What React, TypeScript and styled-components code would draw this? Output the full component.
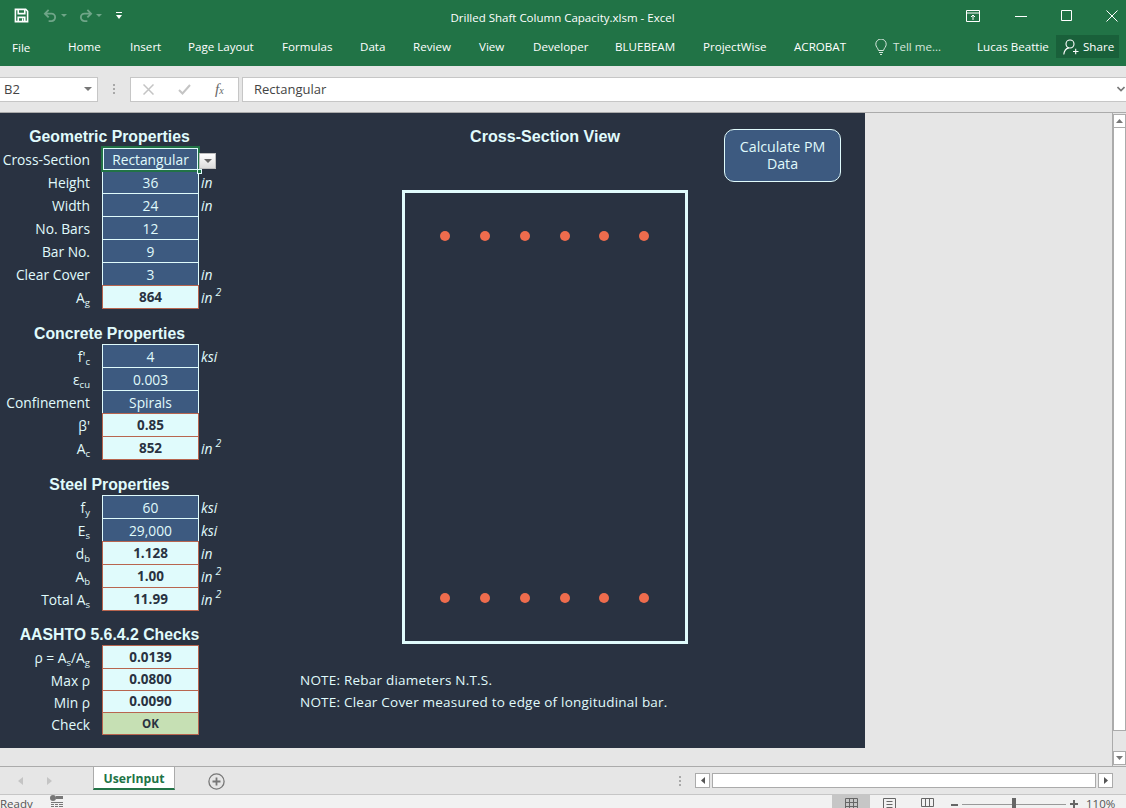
import React from "react";
import styled, { createGlobalStyle } from "styled-components";

const GlobalStyle = createGlobalStyle`
  html, body { margin: 0; padding: 0; overflow: hidden; background: #e6e6e6; }
  * { box-sizing: border-box; }
`;

const ribbonTabs = [
  { label: "Home", width: 62 },
  { label: "Insert", width: 58 },
  { label: "Page Layout", width: 94 },
  { label: "Formulas", width: 78 },
  { label: "Data", width: 53 },
  { label: "Review", width: 66 },
  { label: "View", width: 54 },
  { label: "Developer", width: 82 },
  { label: "BLUEBEAM", width: 88 },
  { label: "ProjectWise", width: 91 },
  { label: "ACROBAT", width: 81 },
];

type Row = {
  label: React.ReactNode;
  value: string;
  kind?: "input" | "calc" | "ok";
  unit?: React.ReactNode;
  short?: boolean;
  selected?: boolean;
};

const inch2 = (
  <>
    in<UnitSup>2</UnitSup>
  </>
);

function UnitSup({ children }: { children: React.ReactNode }) {
  return <SupText>{children}</SupText>;
}

const sections: { title: string; rows: Row[] }[] = [
  {
    title: "Geometric Properties",
    rows: [
      { label: "Cross-Section", value: "Rectangular", selected: true },
      { label: "Height", value: "36", unit: "in" },
      { label: "Width", value: "24", unit: "in" },
      { label: "No. Bars", value: "12" },
      { label: "Bar No.", value: "9" },
      { label: "Clear Cover", value: "3", unit: "in" },
      { label: <>A<sub>g</sub></>, value: "864", kind: "calc", unit: inch2 },
    ],
  },
  {
    title: "Concrete Properties",
    rows: [
      { label: <>f'<sub>c</sub></>, value: "4", unit: "ksi" },
      { label: <>ε<sub>cu</sub></>, value: "0.003" },
      { label: "Confinement", value: "Spirals" },
      { label: "β'", value: "0.85", kind: "calc" },
      { label: <>A<sub>c</sub></>, value: "852", kind: "calc", unit: inch2 },
    ],
  },
  {
    title: "Steel Properties",
    rows: [
      { label: <>f<sub>y</sub></>, value: "60", unit: "ksi" },
      { label: <>E<sub>s</sub></>, value: "29,000", unit: "ksi" },
      { label: <>d<sub>b</sub></>, value: "1.128", kind: "calc", unit: "in" },
      { label: <>A<sub>b</sub></>, value: "1.00", kind: "calc", unit: inch2 },
      { label: <>Total A<sub>s</sub></>, value: "11.99", kind: "calc", unit: inch2 },
    ],
  },
  {
    title: "AASHTO 5.6.4.2 Checks",
    rows: [
      { label: <>ρ = A<sub>s</sub>/A<sub>g</sub></>, value: "0.0139", kind: "calc" },
      { label: "Max ρ", value: "0.0800", kind: "calc", short: true },
      { label: "Min ρ", value: "0.0090", kind: "calc", short: true },
      { label: "Check", value: "OK", kind: "ok", short: true },
    ],
  },
];

const barXs = [43, 83, 123, 163, 202, 242];

const App: React.FC = () => {
  return (
    <>
      <GlobalStyle />
      <Window>
        <TitleBar>
          <QuickAccess>
            <SaveIcon width="15" height="15" viewBox="0 0 16 16" fill="none" stroke="#fff" strokeWidth="1.7">
              <path d="M1.500 1.500h11l2 2v11h-13z" />
              <path d="M4.500 2v4h7V2M4.500 14.500V10h7v4.500" />
              <path d="M8.500 11h1.500v3H8.500z" fill="#fff" stroke="none" />
            </SaveIcon>
            <UndoIcon>
              <svg width="15" height="13" viewBox="0 0 16 14" fill="none" stroke="#6fa588" strokeWidth="2">
                <path d="M6 1 2 5l4 4M2 5h7a4 4 0 0 1 0 8H6" />
              </svg>
              <TinyCaret />
            </UndoIcon>
            <UndoIcon>
              <svg width="15" height="13" viewBox="0 0 16 14" fill="none" stroke="#6fa588" strokeWidth="2">
                <path d="M10 1l4 4-4 4M14 5H7a4 4 0 0 0 0 8h3" />
              </svg>
              <TinyCaret />
            </UndoIcon>
            <svg width="8" height="8" viewBox="0 0 8 8" fill="#fff">
              <path d="M1 0h6v1H1zM1 3h6L4 7z" />
            </svg>
          </QuickAccess>
          <DocTitle>Drilled Shaft Column Capacity.xlsm - Excel</DocTitle>
          <WindowControls>
            <svg width="14" height="12" viewBox="0 0 14 12" fill="none" stroke="#fff">
              <path d="M.5.5h13v11H.5zM.5 3h13M7 10V5M5 7l2-2 2 2" />
            </svg>
            <svg width="12" height="12" viewBox="0 0 12 12" stroke="#fff">
              <path d="M0 6.500h12" />
            </svg>
            <svg width="11" height="11" viewBox="0 0 11 11" fill="none" stroke="#fff">
              <path d="M.5.5h10v10H.5z" />
            </svg>
            <svg width="12" height="12" viewBox="0 0 12 12" stroke="#fff">
              <path d="M.5.5l11 11M11.500.5l-11 11" />
            </svg>
          </WindowControls>
        </TitleBar>

        <RibbonBar>
          <FileTab>File</FileTab>
          {ribbonTabs.map((tab) => (
            <RibbonTab key={tab.label} style={{ width: tab.width }}>
              {tab.label}
            </RibbonTab>
          ))}
          <TellMe>
            <svg width="12" height="16" viewBox="0 0 12 16" fill="none" stroke="#d5e6dc">
              <path d="M3.500 11.500C3 9 .8 8 .8 5.200a5.200 5.200 0 0 1 10.400 0C11.200 8 9 9 8.500 11.500zM4 13.500h4M5 15.500h2" />
            </svg>
            Tell me...
          </TellMe>
          <UserName>Lucas Beattie</UserName>
          <ShareButton>
            <svg width="16" height="16" viewBox="0 0 16 16" fill="none" stroke="#fff" strokeWidth="1.1">
              <circle cx="7" cy="5" r="4" />
              <path d="M.8 15.500c.4-3.500 2.500-6 5-6.600M10 12.500h5.500M12.700 9.800v5.400" />
            </svg>
            Share
          </ShareButton>
        </RibbonBar>

        <FormulaBar>
          <NameBox>
            B2
            <svg width="8" height="4" viewBox="0 0 8 4" fill="#777">
              <path d="M0 0h8L4 4z" />
            </svg>
          </NameBox>
          <GripDots />
          <FormulaButtons>
            <svg width="11" height="11" viewBox="0 0 11 11" stroke="#c4c4c4" strokeWidth="1.500">
              <path d="M.5.5l10 10M10.500.5l-10 10" />
            </svg>
            <svg width="13" height="11" viewBox="0 0 13 11" fill="none" stroke="#c4c4c4" strokeWidth="2">
              <path d="M1 6l3.500 3.500L12 1" />
            </svg>
            <FxLabel>
              f<FxSmall>x</FxSmall>
            </FxLabel>
          </FormulaButtons>
          <FormulaInput>
            Rectangular
            <svg width="8" height="6" viewBox="0 0 8 6" fill="none" stroke="#777" strokeWidth="1.600">
              <path d="M.5 1L4 4.500 7.500 1" />
            </svg>
          </FormulaInput>
        </FormulaBar>

        <SheetArea>
          <SheetViewport>
            <DarkPanel>
              <InputColumn>
                {sections.map((section) => (
                  <Section key={section.title}>
                    <SectionTitle>{section.title}</SectionTitle>
                    {section.rows.map((row) => (
                      <DataRow key={row.value} $short={row.short}>
                        <RowLabel>{row.label}</RowLabel>
                        <Cell $kind={row.kind ?? "input"} $short={row.short} $selected={row.selected}>
                          {row.value}
                          {row.selected && (
                            <>
                              <SelectionFrame />
                              <FillHandle />
                              <DropButton>
                                <svg width="8" height="4" viewBox="0 0 8 4" fill="#666">
                                  <path d="M0 0h8L4 4z" />
                                </svg>
                              </DropButton>
                            </>
                          )}
                        </Cell>
                        <Unit>{row.unit}</Unit>
                      </DataRow>
                    ))}
                  </Section>
                ))}
              </InputColumn>
              <ViewColumn>
                <ViewHeader>
                  <ViewTitle>Cross-Section View</ViewTitle>
                  <CalcButton>Calculate PM Data</CalcButton>
                </ViewHeader>
                <Drawing width="286" height="454" viewBox="0 0 286 454">
                  <rect x="1.500" y="1.500" width="283" height="451" fill="none" stroke="#e0fbfc" strokeWidth="3" />
                  {barXs.map((x) => (
                    <g key={x} fill="#ee6c4d">
                      <circle cx={x} cy="46" r="5" />
                      <circle cx={x} cy="408" r="5" />
                    </g>
                  ))}
                </Drawing>
                <Notes>
                  <div>NOTE: Rebar diameters N.T.S.</div>
                  <div>NOTE: Clear Cover measured to edge of longitudinal bar.</div>
                </Notes>
              </ViewColumn>
            </DarkPanel>
          </SheetViewport>
          <VScroll>
            <ScrollEnd>
              <svg width="7" height="4" viewBox="0 0 7 4" fill="#777">
                <path d="M0 4h7L3.500 0z" />
              </svg>
            </ScrollEnd>
            <ScrollThumb />
            <ScrollEnd>
              <svg width="7" height="4" viewBox="0 0 7 4" fill="#777">
                <path d="M0 0h7L3.500 4z" />
              </svg>
            </ScrollEnd>
          </VScroll>
        </SheetArea>

        <TabStrip>
          <TabNav>
            <svg width="6" height="8" viewBox="0 0 6 8" fill="#c4c4c4">
              <path d="M5 0v8L0 4z" />
            </svg>
            <svg width="6" height="8" viewBox="0 0 6 8" fill="#c4c4c4">
              <path d="M1 0v8l5-4z" />
            </svg>
          </TabNav>
          <SheetTab>UserInput</SheetTab>
          <AddSheet>
            <svg width="17" height="17" viewBox="0 0 17 17" fill="none" stroke="#777" strokeWidth="1.300">
              <circle cx="8.500" cy="8.500" r="7.600" />
              <path strokeWidth="1.800" d="M8.500 4.500v8M4.500 8.500h8" />
            </svg>
          </AddSheet>
          <GripDots />
          <HScroll>
            <HScrollEnd>
              <svg width="4" height="7" viewBox="0 0 4 7" fill="#555">
                <path d="M4 0v7L0 3.500z" />
              </svg>
            </HScrollEnd>
            <HScrollTrack />
            <HScrollEnd>
              <svg width="4" height="7" viewBox="0 0 4 7" fill="#555">
                <path d="M0 0v7l4-3.500z" />
              </svg>
            </HScrollEnd>
          </HScroll>
        </TabStrip>

        <StatusBar>
          <StatusText>Ready</StatusText>
          <svg width="13" height="13" viewBox="0 0 13 13" fill="#777">
            <circle cx="3" cy="3" r="3" />
            <path d="M6 1h7v3H6zM1 7h12v1H1zM1 9h3v1H1zM5 9h3v1H5zM9 9h4v1H9zM1 11h3v1H1zM5 11h3v1H5zM9 11h4v1H9z" />
          </svg>
          <ViewButtons>
            <ViewButton $active>
              <svg width="13" height="13" viewBox="0 0 13 13" fill="none" stroke="#666">
                <path d="M.5.5h12v12H.5zM.5 4.500h12M.5 8.500h12M4.500.5v12M8.500.5v12" />
              </svg>
            </ViewButton>
            <ViewButton>
              <svg width="13" height="13" viewBox="0 0 13 13" fill="none" stroke="#666">
                <path d="M.5.5h12v12H.5zM3.500 3.500h6M3.500 6.500h6M3.500 9.500h6" />
              </svg>
            </ViewButton>
            <ViewButton>
              <svg width="13" height="13" viewBox="0 0 13 13" fill="none" stroke="#666">
                <path d="M.5.5h12v8H.5zM4.500.5v8M8.500.5v8" />
              </svg>
            </ViewButton>
          </ViewButtons>
          <ZoomSlider>
            <svg width="7" height="7" viewBox="0 0 7 7" fill="#666">
              <path d="M0 3h7v2H0z" />
            </svg>
            <ZoomTrack>
              <ZoomThumb />
            </ZoomTrack>
            <svg width="8" height="8" viewBox="0 0 8 8" fill="#666">
              <path d="M0 3h8v2H0zM3 0h2v8H3z" />
            </svg>
          </ZoomSlider>
          <ZoomValue>110%</ZoomValue>
        </StatusBar>
      </Window>
    </>
  );
};

const uiFont = `"Open Sans", "Noto Sans", sans-serif`;

const Window = styled.div`
  width: 1126px;
  height: 808px;
  display: flex;
  flex-direction: column;
  overflow: hidden;
  background: #e6e6e6;
  font-family: ${uiFont};
`;

const TitleBar = styled.div`
  height: 33px;
  flex: none;
  background: #217346;
  display: flex;
  align-items: center;
  position: relative;
  padding-bottom: 2px;
  color: #fff;
`;

const QuickAccess = styled.div`
  display: flex;
  align-items: center;
  gap: 11px;
  padding-left: 14px;
  & > svg:last-child {
    margin-left: 2px;
  }
`;

const SaveIcon = styled.svg`
  margin-right: 3px;
`;

const UndoIcon = styled.div`
  display: flex;
  align-items: center;
  gap: 3px;
`;

const TinyCaret = styled.span`
  width: 0;
  height: 0;
  border-left: 3px solid transparent;
  border-right: 3px solid transparent;
  border-top: 3px solid #6fa588;
`;

const DocTitle = styled.div`
  position: absolute;
  left: 450px;
  width: 225px;
  top: 10px;
  text-align: center;
  white-space: nowrap;
  font-size: 11.5px;
  line-height: 16px;
`;

const WindowControls = styled.div`
  margin-left: auto;
  display: flex;
  align-items: center;
  gap: 34px;
  padding-right: 8px;
  & > svg:first-child {
    margin-right: 1px;
  }
`;

const RibbonBar = styled.div`
  height: 33px;
  flex: none;
  background: #217346;
  display: flex;
  align-items: center;
  padding-bottom: 6px;
  color: #fff;
  font-size: 11.6px;
`;

const FileTab = styled.div`
  width: 68px;
  padding-left: 12px;
  padding-top: 2px;
`;

const RibbonTab = styled.div`
  white-space: nowrap;
`;

const TellMe = styled.div`
  display: flex;
  align-items: center;
  gap: 6px;
  color: #d5e6dc;
  width: 102px;
`;

const UserName = styled.div`
  width: 79px;
  white-space: nowrap;
`;

const ShareButton = styled.div`
  width: 63px;
  height: 23px;
  background: #19603a;
  display: flex;
  align-items: center;
  gap: 4px;
  padding-left: 7px;
`;

const FormulaBar = styled.div`
  height: 47px;
  flex: none;
  background: #e6e6e6;
  display: flex;
  align-items: center;
  border-bottom: 1px solid #ababab;
`;

const NameBox = styled.div`
  width: 98px;
  height: 25px;
  background: #fff;
  border: 1px solid #c6c6c6;
  border-left: none;
  display: flex;
  align-items: center;
  justify-content: space-between;
  padding: 0 5px 0 4px;
  font-size: 13px;
  color: #444;
`;

const GripDots = styled.span`
  width: 2px;
  height: 10px;
  flex: none;
  margin: 0 15px;
  background: repeating-linear-gradient(to bottom, #a8a8a8 0 2px, transparent 2px 4px);
`;

const FormulaButtons = styled.div`
  width: 109px;
  height: 25px;
  background: #fff;
  border: 1px solid #c6c6c6;
  display: flex;
  align-items: center;
  gap: 24px;
  padding-left: 12px;
`;

const FxLabel = styled.span`
  font-family: "Liberation Serif", serif;
  font-style: italic;
  font-size: 15px;
  color: #666;
  line-height: 1;
`;

const FxSmall = styled.span`
  font-size: 10px;
`;

const FormulaInput = styled.div`
  flex: 1;
  height: 25px;
  margin-left: 3px;
  background: #fff;
  border: 1px solid #c6c6c6;
  border-right: none;
  display: flex;
  align-items: center;
  justify-content: space-between;
  padding: 0 1px 0 11px;
  font-size: 13px;
  color: #444;
`;

const SheetArea = styled.div`
  height: 654px;
  flex: none;
  display: flex;
  border-bottom: 1px solid #ababab;
`;

const SheetViewport = styled.div`
  width: 1113px;
  flex: none;
  border-right: 1px solid #ababab;
`;

const DarkPanel = styled.div`
  width: 865px;
  height: 635px;
  background: #293241;
  display: flex;
`;

const InputColumn = styled.div`
  width: 300px;
  flex: none;
  padding-top: 11px;
  display: flex;
  flex-direction: column;
  gap: 13px;
`;

const Section = styled.div`
  display: flex;
  flex-direction: column;
  &:last-child {
    margin-top: -1px;
  }
`;

const SectionTitle = styled.div`
  width: 219px;
  height: 23px;
  text-align: center;
  line-height: 25px;
  font-family: "Liberation Sans", Arial, sans-serif;
  font-weight: 700;
  font-size: 15.8px;
  color: #e0fbfc;
  white-space: nowrap;
`;

const DataRow = styled.div<{ $short?: boolean }>`
  height: ${(p) => (p.$short ? 22 : 23)}px;
  display: flex;
`;

const RowLabel = styled.div`
  width: 90px;
  margin-right: 12px;
  flex: none;
  text-align: right;
  white-space: nowrap;
  font-size: 13.8px;
  line-height: 25px;
  color: #e0fbfc;
  sub {
    font-size: 9.5px;
    line-height: 0;
    vertical-align: -3px;
  }
`;

const cellColours = {
  input: { bg: "#3d5a80", fg: "#e0fbfc", border: "#e0fbfc" },
  calc: { bg: "#e0fbfc", fg: "#293241", border: "#b8654f" },
  ok: { bg: "#c6e0b4", fg: "#293241", border: "#b8654f" },
};

const Cell = styled.div<{ $kind: "input" | "calc" | "ok"; $short?: boolean; $selected?: boolean }>`
  position: relative;
  z-index: ${(p) => (p.$selected ? 2 : 1)};
  width: 97px;
  height: ${(p) => (p.$short ? 23 : 24)}px;
  flex: none;
  text-align: center;
  background: ${(p) => cellColours[p.$kind].bg};
  color: ${(p) => cellColours[p.$kind].fg};
  border: 1px solid ${(p) => cellColours[p.$kind].border};
  font-size: ${(p) => (p.$kind === "ok" ? 11.5 : p.$kind === "input" ? 13.8 : 13.5)}px;
  font-weight: ${(p) => (p.$kind === "input" ? 400 : 700)};
  line-height: ${(p) => (p.$short ? 21 : 23)}px;
  white-space: nowrap;
`;

const SelectionFrame = styled.span`
  position: absolute;
  inset: -2px;
  border: 2px solid #217346;
  box-shadow: inset 0 0 0 1px #e0fbfc;
`;

const FillHandle = styled.span`
  position: absolute;
  right: -4px;
  bottom: -4px;
  width: 5px;
  height: 5px;
  background: #217346;
  border: 1px solid #e0fbfc;
`;

const DropButton = styled.span`
  position: absolute;
  left: 96px;
  top: 5px;
  width: 17px;
  height: 16px;
  background: linear-gradient(#ffffff, #dcdcdc);
  border: 1px solid #bdbdbd;
  display: flex;
  align-items: center;
  justify-content: center;
`;

const Unit = styled.div`
  padding-left: 2px;
  font-style: italic;
  font-size: 13.8px;
  line-height: 25px;
  color: #e0fbfc;
  white-space: nowrap;
`;

const SupText = styled.span`
  font-size: 10.5px;
  margin-left: 3px;
  position: relative;
  top: -7px;
`;

const ViewColumn = styled.div`
  flex: 1;
  display: flex;
  flex-direction: column;
`;

const ViewHeader = styled.div`
  height: 77px;
  flex: none;
  display: flex;
  padding-left: 102px;
`;

const ViewTitle = styled.div`
  width: 286px;
  height: 23px;
  margin-top: 12px;
  text-align: center;
  line-height: 23px;
  font-family: "Liberation Sans", Arial, sans-serif;
  font-weight: 700;
  font-size: 16.1px;
  color: #e0fbfc;
`;

const CalcButton = styled.div`
  width: 117px;
  height: 53px;
  margin-top: 16px;
  margin-left: 36px;
  padding: 8px 4px;
  background: #3d5a80;
  border: 1px solid #e0fbfc;
  border-radius: 10px;
  color: #e0fbfc;
  text-align: center;
  font-size: 14.2px;
  line-height: 17px;
`;

const Drawing = styled.svg`
  display: block;
  margin-left: 102px;
  flex: none;
`;

const Notes = styled.div`
  margin-top: 25px;
  font-size: 13.5px;
  line-height: 22px;
  color: #e0fbfc;
  letter-spacing: 0.22px;
`;

const VScroll = styled.div`
  width: 13px;
  flex: none;
  display: flex;
  flex-direction: column;
  padding: 1px 0;
`;

const ScrollEnd = styled.div`
  height: 14px;
  flex: none;
  background: #fff;
  border: 1px solid #ababab;
  display: flex;
  align-items: center;
  justify-content: center;
`;

const ScrollThumb = styled.div`
  flex: 1;
  margin-bottom: 20px;
  background: #fff;
  border: 1px solid #ababab;
  border-top: none;
`;

const TabStrip = styled.div`
  height: 28px;
  flex: none;
  display: flex;
  align-items: center;
  border-bottom: 1px solid #c6c6c6;
`;

const TabNav = styled.div`
  width: 93px;
  height: 27px;
  display: flex;
  align-items: center;
  gap: 22px;
  padding-left: 18px;
`;

const SheetTab = styled.div`
  width: 82px;
  height: 23px;
  align-self: flex-start;
  background: #fff;
  border-left: 1px solid #ababab;
  border-right: 1px solid #ababab;
  border-bottom: 2px solid #217346;
  color: #217346;
  text-align: center;
  font-weight: 700;
  font-size: 12.2px;
  line-height: 24px;
`;

const AddSheet = styled.div`
  width: 489px;
  height: 27px;
  padding-left: 33px;
  padding-top: 1px;
  display: flex;
  align-items: center;
  svg {
    display: block;
  }
`;

const HScroll = styled.div`
  margin-left: -1px;
  width: 418px;
  height: 15px;
  display: flex;
  gap: 2px;
`;

const HScrollEnd = styled.div`
  width: 15px;
  height: 15px;
  flex: none;
  background: #fff;
  border: 1px solid #ababab;
  display: flex;
  align-items: center;
  justify-content: center;
`;

const HScrollTrack = styled.div`
  flex: 1;
  background: #fff;
  border: 1px solid #ababab;
`;

const StatusBar = styled.div`
  flex: 1;
  background: #f1f1f1;
  display: flex;
  align-items: flex-start;
  overflow: hidden;
  color: #555;
  font-size: 11.5px;
`;

const StatusText = styled.div`
  width: 50px;
  line-height: 18px;
`;

const ViewButtons = styled.div`
  margin-left: 769px;
  display: flex;
`;

const ViewButton = styled.div<{ $active?: boolean }>`
  width: 38px;
  height: 13px;
  display: flex;
  justify-content: center;
  padding-top: 3px;
  background: ${(p) => (p.$active ? "#c6c6c6" : "transparent")};
`;

const ZoomSlider = styled.div`
  margin-left: 5px;
  width: 127px;
  height: 18px;
  display: flex;
  align-items: center;
  gap: 4px;
`;

const ZoomTrack = styled.div`
  flex: 1;
  height: 1px;
  background: #999;
  position: relative;
`;

const ZoomThumb = styled.span`
  position: absolute;
  left: 50px;
  top: -6px;
  width: 4px;
  height: 13px;
  background: #666;
`;

const ZoomValue = styled.div`
  margin-left: 8px;
  line-height: 18px;
  white-space: nowrap;
`;

export default App;
